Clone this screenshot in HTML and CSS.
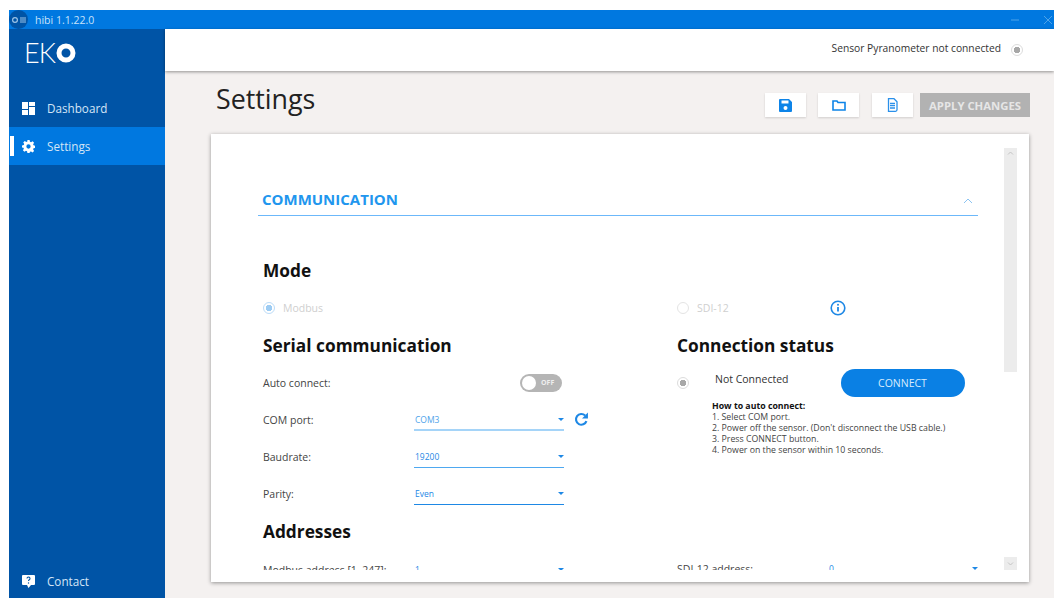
FILE: index.html
```html
<!DOCTYPE html>
<html lang="en">
<head>
<meta charset="utf-8">
<title>hibi</title>
<link rel="stylesheet" href="styles.css">
</head>
<body>
<div class="window">
  <header class="titlebar">
    <span class="app-badge">
      <svg width="16" height="8" viewBox="0 0 16 8"><circle cx="4" cy="4" r="2.4" fill="none" stroke="#9cc3e6" stroke-width="1.2"/><path d="M9 2h6M9 4h6M9 6h6" stroke="#9cc3e6" stroke-width="1"/></svg>
    </span>
    <span class="app-name">hibi 1.1.22.0</span>
    <span class="win-controls">
      <svg width="8" height="8" viewBox="0 0 8 8"><path d="M0 4h8" stroke="#4fa3e8" stroke-width="1"/></svg>
      <svg width="10" height="10" viewBox="0 0 10 10"><path d="M1 1l8 8M9 1l-8 8" stroke="#4fa3e8" stroke-width="1"/></svg>
    </span>
  </header>
  <div class="shell">
    <nav class="sidebar">
      <div class="logo"><span class="logo-text">EK</span><svg class="logo-ring" width="20" height="20" viewBox="0 0 20 20"><circle cx="10" cy="10" r="7" fill="none" stroke="#fff" stroke-width="5"/></svg></div>
      <a class="nav-item">
        <svg class="nav-icon" width="13" height="13" viewBox="0 0 13 13" fill="#fff"><path d="M0 0h6v7H0zM7 0h6v4H7zM0 8h6v5H0zM7 5h6v8H7z"/></svg>
        <span>Dashboard</span>
      </a>
      <a class="nav-item active">
        <svg class="nav-icon" width="13" height="13" viewBox="0 0 24 24" fill="#fff"><path fill-rule="evenodd" d="M10 0h4l.7 3.3 2 .8L19.500 2.300l2.800 2.800-1.800 2.800.8 2 3.300.7v4l-3.300.7-.8 2 1.800 2.800-2.800 2.800-2.800-1.800-2 .8L14 24h-4l-.7-3.300-2-.8-2.800 1.800-2.800-2.800 1.800-2.800-.8-2L0 14v-4l3.300-.7.8-2L2.300 4.500l2.800-2.800 2.800 1.800 2-.8zM12 8a4 4 0 1 0 0 8 4 4 0 0 0 0-8z"/></svg>
        <span>Settings</span>
      </a>
      <a class="nav-item contact">
        <svg class="nav-icon" width="13" height="13" viewBox="0 0 13 13"><path fill="#fff" d="M1 0h11a1 1 0 0 1 1 1v8a1 1 0 0 1-1 1H9l-2.500 3L5 10H1a1 1 0 0 1-1-1V1a1 1 0 0 1 1-1z"/><path d="M5 3.500a1.500 1.500 0 1 1 2.300 1.300c-.6.4-.8.6-.8 1.200" fill="none" stroke="#0054a6" stroke-width="1.100"/><circle cx="6.500" cy="8" r=".7" fill="#0054a6"/></svg>
        <span>Contact</span>
      </a>
    </nav>
    <main class="main">
      <div class="topbar">
        <span class="sensor-status">Sensor Pyranometer not connected</span>
        <span class="radio radio-status"></span>
      </div>
      <div class="page-head">
        <h1>Settings</h1>
        <div class="actions">
          <button class="icon-btn"><svg width="13" height="13" viewBox="0 0 13 13"><path fill="#0d84e8" fill-rule="evenodd" d="M1 0h9l3 3v9a1 1 0 0 1-1 1H1a1 1 0 0 1-1-1V1a1 1 0 0 1 1-1zM2.500 1.500v3h7v-3zM6.500 7a2 2 0 1 0 0 4 2 2 0 0 0 0-4z"/></svg></button>
          <button class="icon-btn"><svg width="14" height="12" viewBox="0 0 14 12"><path fill="none" stroke="#0d84e8" stroke-width="1.600" d="M1 2h4l1 1.500h7V11H1z"/></svg></button>
          <button class="icon-btn icon-btn-notes"><svg width="11" height="14" viewBox="0 0 11 14"><path fill="none" stroke="#2a90ea" stroke-width="1.300" d="M1.500.7h5.500l3 3v8.100a1.500 1.500 0 0 1-1.500 1.500h-7V.7zM3 5.500h5M3 7.700h5M3 10h5"/></svg></button>
          <button class="apply-btn">APPLY CHANGES</button>
        </div>
      </div>
      <section class="card">
        <div class="card-body">
          <div class="section-head">
            <h2>COMMUNICATION</h2>
            <svg width="10" height="6" viewBox="0 0 10 6"><path d="M1 5l4-4 4 4" fill="none" stroke="#8cc4f2" stroke-width="1"/></svg>
          </div>
          <h3 class="mode-title">Mode</h3>
          <div class="two-col mode-row">
            <label class="option"><span class="radio radio-on"></span>Modbus</label>
            <div class="sdi">
              <label class="option"><span class="radio radio-off"></span>SDI-12</label>
              <svg class="info" width="16" height="16" viewBox="0 0 16 16"><circle cx="8" cy="8" r="6.800" fill="none" stroke="#1e88e5" stroke-width="1.600"/><path d="M8 7v4.500" stroke="#1e88e5" stroke-width="1.800"/><circle cx="8" cy="4.800" r="1" fill="#1e88e5"/></svg>
            </div>
          </div>
          <div class="two-col">
            <div class="left-col">
              <h3>Serial communication</h3>
              <div class="field first-field">
                <span class="field-label">Auto connect:</span>
                <span class="toggle-cell"><span class="toggle"><span class="knob"></span><span class="toggle-text">OFF</span></span></span>
              </div>
              <div class="field">
                <span class="field-label">COM port:</span>
                <div class="select pale"><span>COM3</span><i class="caret"></i></div>
                <svg class="refresh" width="15" height="15" viewBox="0 0 14 14"><path d="M11.600 8.500A5 5 0 1 1 10.400 3.300" fill="none" stroke="#1e88e5" stroke-width="2"/><path d="M13 .5V6H7.500z" fill="#1e88e5"/></svg>
              </div>
              <div class="field">
                <span class="field-label">Baudrate:</span>
                <div class="select mid"><span>19200</span><i class="caret"></i></div>
              </div>
              <div class="field">
                <span class="field-label">Parity:</span>
                <div class="select"><span>Even</span><i class="caret"></i></div>
              </div>
              <h3 class="addr-title">Addresses</h3>
              <div class="field addr-field">
                <span class="field-label">Modbus address [1..247]:</span>
                <div class="select"><span>1</span><i class="caret"></i></div>
              </div>
            </div>
            <div class="right-col">
              <h3>Connection status</h3>
              <div class="status-row">
                <span class="radio radio-status"></span>
                <span class="status-text">Not Connected</span>
                <button class="connect-btn">CONNECT</button>
              </div>
              <div class="howto">
                <strong>How to auto connect:</strong>
                <ol>
                  <li>1. Select COM port.</li>
                  <li>2. Power off the sensor. (Don't disconnect the USB cable.)</li>
                  <li>3. Press CONNECT button.</li>
                  <li>4. Power on the sensor within 10 seconds.</li>
                </ol>
              </div>
              <div class="field sdi-field">
                <span class="field-label">SDI-12 address:</span>
                <div class="select"><span>0</span><i class="caret"></i></div>
              </div>
            </div>
          </div>
        </div>
        <div class="scrollbar">
          <div class="thumb"><svg width="7" height="4" viewBox="0 0 7 4"><path d="M1 3.500l2.500-2.500L6 3.500" fill="none" stroke="#c4c4c4"/></svg></div>
          <div class="scroll-down"><svg width="7" height="4" viewBox="0 0 7 4"><path d="M1 .5L3.500 3 6 .5" fill="none" stroke="#c4c4c4"/></svg></div>
        </div>
      </section>
    </main>
  </div>
</div>
</body>
</html>
```

FILE: styles.css
```css
* { box-sizing: border-box; }

html, body { height: 100%; }

body {
  margin: 0;
  padding: 10px 0 0 9px;
  background: #fff;
  font-family: "Open Sans", "Noto Sans", sans-serif;
  overflow: hidden;
}

.window {
  height: 588px;
  display: flex;
  flex-direction: column;
}

/* Title bar */
.titlebar {
  height: 19px;
  flex: none;
  background: #0078e0;
  display: flex;
  align-items: center;
  color: #c8e2fa;
  font-size: 10.5px;
}

.app-badge {
  width: 19px;
  height: 19px;
  border-radius: 50%;
  background: #0054a6;
  display: flex;
  align-items: center;
  justify-content: center;
}

.app-name { margin-left: 7px; }

.win-controls {
  margin-left: auto;
  display: flex;
  align-items: center;
  gap: 24px;
  padding-right: 1px;
}

.shell {
  flex: 1;
  display: flex;
  min-height: 0;
}

/* Side navigation */
.sidebar {
  width: 156px;
  flex: none;
  background: #0054a6;
  display: flex;
  flex-direction: column;
  color: #d4e5f6;
  font-size: 11.7px;
}

.logo {
  height: 60px;
  padding: 9px 0 0 15px;
  display: flex;
  align-items: flex-start;
  color: #fff;
}

.logo-text {
  font-family: "Lato", sans-serif;
  font-weight: 300;
  font-size: 27px;
  line-height: 30px;
  letter-spacing: -1px;
}

.logo-ring { margin: 5px 0 0 1px; }

.nav-item {
  height: 38px;
  display: flex;
  align-items: center;
  padding-left: 13px;
  gap: 12px;
}

.nav-item.active {
  background: #0078e0;
  position: relative;
}

/* White marker on the selected entry */
.nav-item.active::before {
  content: "";
  position: absolute;
  left: 1px;
  top: 9px;
  width: 4px;
  height: 20px;
  background: #fff;
}

.nav-item.contact {
  margin-top: auto;
  height: 34px;
}

.nav-icon { flex: none; }

/* Main column */
.main {
  flex: 1;
  min-width: 0;
  background: #f4f1f0;
  display: flex;
  flex-direction: column;
}

.topbar {
  height: 42px;
  flex: none;
  background: #fff;
  box-shadow: 0 1px 3px rgba(0, 0, 0, 0.4);
  display: flex;
  align-items: center;
  justify-content: flex-end;
  padding-right: 31px;
  gap: 10px;
  color: #333;
  font-size: 10.25px;
}

.sensor-status { margin-top: -4px; }

.page-head {
  height: 63px;
  flex: none;
  display: flex;
  justify-content: space-between;
  padding: 0 24px 0 51px;
}

.page-head h1 {
  margin: 10px 0 0;
  font-size: 26.8px;
  font-weight: 400;
  line-height: 36px;
  color: #222;
}

.actions {
  display: flex;
  gap: 12px;
  padding-top: 22px;
  height: 46px;
}

.icon-btn {
  width: 41px;
  height: 24px;
  border: 0;
  padding: 0;
  background: #fff;
  box-shadow: 0 1px 2px rgba(0, 0, 0, 0.15);
  display: flex;
  align-items: center;
  justify-content: center;
}

.icon-btn-notes { margin-left: 1px; }

.apply-btn {
  width: 110px;
  height: 24px;
  margin-left: -5px;
  border: 0;
  padding: 0;
  background: #b2b2b2;
  color: #e6e6e6;
  font: 700 11.3px "Open Sans", sans-serif;
}

/* Settings card */
.card {
  width: 818px;
  height: 448px;
  margin-left: 46px;
  background: #fff;
  box-shadow: 0 1px 4px rgba(0, 0, 0, 0.4);
  display: flex;
  align-items: flex-start;
}

.card-body {
  flex: 1;
  min-width: 0;
  height: 436px;
  overflow: hidden;
  padding: 54px 26px 0 47px;
}

.section-head {
  width: 720px;
  height: 28px;
  border-bottom: 1px solid #6cb8fa;
  display: flex;
  justify-content: space-between;
  align-items: center;
  padding: 0 5px 2px 4px;
}

.section-head h2 {
  margin: -4px 0 0;
  font-size: 15px;
  font-weight: 700;
  line-height: 22px;
  color: #2196ee;
}

h3 {
  margin: 0;
  font-size: 17.3px;
  font-weight: 700;
  line-height: 26px;
  color: #111;
}

.mode-title { margin: 42px 0 0 5px; }

.two-col {
  display: grid;
  grid-template-columns: 414px 1fr;
  padding-left: 5px;
  width: 720px;
}

.mode-row {
  height: 37px;
  margin-top: 15px;
  align-items: start;
}

.option {
  display: flex;
  align-items: center;
  gap: 8px;
  height: 18px;
  font-size: 10.5px;
  color: #cfcfcf;
}

.sdi {
  display: flex;
  align-items: center;
}

.info { margin-left: 101px; }

.radio {
  width: 12px;
  height: 12px;
  border-radius: 50%;
  flex: none;
  display: inline-block;
}

.radio-on { border: 1px solid #bcdcf8; background: radial-gradient(circle, #9dccf3 0 3px, #fff 3.5px); }

.radio-off { border: 1px solid #e4e4e4; background: #fff; }

.radio-status { border: 1px solid #dcdcdc; background: radial-gradient(circle, #a8a8a8 0 3px, #fff 3.5px); }

.left-col h3, .right-col h3 { margin-top: -3px; }

.field {
  height: 37px;
  display: flex;
  align-items: center;
  font-size: 10.5px;
  color: #444;
}

.first-field { margin-top: 5px; }

.field-label { width: 151px; flex: none; }

.toggle-cell {
  width: 148px;
  display: flex;
  justify-content: flex-end;
}

.toggle {
  width: 42px;
  height: 18px;
  border-radius: 9px;
  background: #b5b5b5;
  display: flex;
  align-items: center;
  padding-left: 2px;
}

.knob {
  width: 14px;
  height: 14px;
  border-radius: 50%;
  background: #fff;
}

.toggle-text {
  margin-left: 5px;
  font-size: 7px;
  font-weight: 700;
  color: #eee;
}

.select {
  width: 150px;
  height: 23px;
  display: flex;
  align-items: center;
  justify-content: space-between;
  padding: 0 0 0 1px;
  color: #1e88e5;
  font-size: 8.5px;
  border-bottom: 1px solid #1e88e5;
}

.select.pale { border-bottom: 2px solid #a5d4f8; padding-top: 2px; color: #4ea3ea; }

.select.mid { border-bottom-color: #4ea8f0; }

.caret {
  width: 0;
  height: 0;
  border: 3.5px solid transparent;
  border-top: 3.5px solid #1e88e5;
  border-bottom-width: 0;
}

.refresh { margin-left: 10px; }

.left-col .addr-title { margin-top: 7px; }

.addr-field { margin-top: 6px; }

.addr-field .select, .sdi-field .select { border-bottom: 0; }

.status-row {
  display: flex;
  align-items: center;
  height: 28px;
  margin-top: 10px;
  font-size: 10.5px;
  color: #333;
}

.status-text { margin-left: 26px; margin-top: -8px; }

.connect-btn {
  width: 124px;
  height: 28px;
  margin-left: 52px;
  border: 0;
  border-radius: 14px;
  background: #0a80e4;
  color: #d8ecfc;
  font: 400 10.5px "Open Sans", sans-serif;
}

.howto {
  margin: 4px 0 0 35px;
  font-size: 8.75px;
  line-height: 11px;
  color: #444;
}

.howto strong { color: #111; font-weight: 700; }

.howto ol { margin: 0; padding: 0; list-style: none; }

.sdi-field { margin-top: 94px; }

/* Scroll track */
.scrollbar {
  width: 13px;
  flex: none;
  height: 422px;
  margin: 14px 12px 0 0;
  display: flex;
  flex-direction: column;
  justify-content: space-between;
}

.thumb {
  height: 224px;
  background: #ececec;
  display: flex;
  justify-content: center;
  padding-top: 3px;
}

.scroll-down {
  height: 13px;
  background: #ececec;
  display: flex;
  justify-content: center;
  align-items: center;
}
```
